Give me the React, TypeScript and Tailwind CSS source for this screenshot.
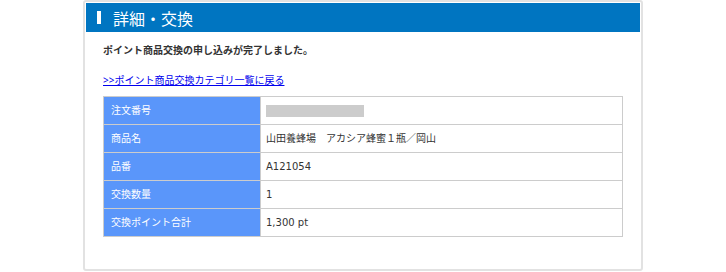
import React from 'react';

const rows: { label: string; value: React.ReactNode }[] = [
  { label: '注文番号', value: <span className="block w-[98px] h-[12px] bg-[#cccccc]" /> },
  { label: '商品名', value: '山田養蜂場　アカシア蜂蜜１瓶／岡山' },
  { label: '品番', value: 'A121054' },
  { label: '交換数量', value: '1' },
  { label: '交換ポイント合計', value: '1,300 pt' },
];

export default function App() {
  return (
    <div className="w-[726px] h-[272px] bg-white font-['Noto_Sans','Noto_Sans_CJK_JP',sans-serif]">
      {/* Panel */}
      <div className="mx-auto w-[560px] h-[271px] border-2 border-[#e2e2e2] rounded-[3px] p-px bg-white">
        {/* Header */}
        <div className="h-[29px] bg-[#0075c1] flex items-center pl-[11px]">
          <span className="w-[4px] h-[13px] bg-white mr-[12px]" />
          <h1 className="text-white text-[16px] leading-none font-['Noto_Sans_CJK_JP',sans-serif]">詳細・交換</h1>
        </div>

        <div className="px-[17px] pt-[11px]">
          <p className="text-[10px] leading-[14px] font-bold text-[#333333]">
            ポイント商品交換の申し込みが完了しました。
          </p>
          <a href="#" className="block mt-[16px] text-[10px] leading-[14px] text-[#0000ee] underline">
            &gt;&gt;ポイント商品交換カテゴリ一覧に戻る
          </a>

          <table className="mt-[9px] w-full border-collapse text-[10px]">
            <tbody>
              {rows.map((r) => (
                <tr key={r.label} className="h-[28px]">
                  <th className="w-[157px] border border-[#cccccc] bg-[#5a96fa] text-white font-normal text-left pl-[7px]">
                    {r.label}
                  </th>
                  <td className="border border-[#cccccc] text-[#333333] pl-[5px] font-['DejaVu_Sans','Noto_Sans_CJK_JP',sans-serif]">
                    {r.value}
                  </td>
                </tr>
              ))}
            </tbody>
          </table>
        </div>
      </div>
    </div>
  );
}
